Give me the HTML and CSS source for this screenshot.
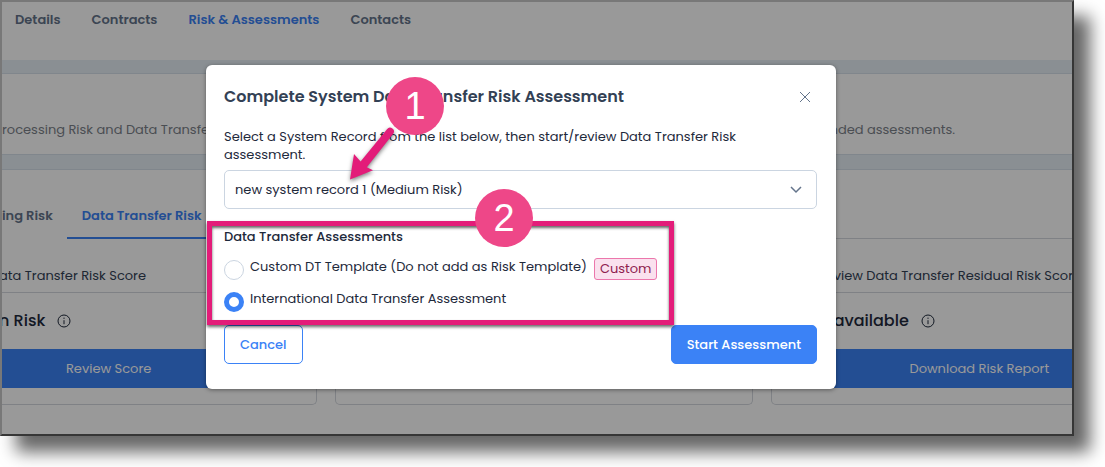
FILE: index.html
```
<!DOCTYPE html>
<html lang="en">
<head>
<meta charset="UTF-8" />
<meta name="viewport" content="width=device-width, initial-scale=1" />
<title>Risk &amp; Assessments</title>
<link rel="stylesheet" href="styles.css">
</head>
<body>

<div class="window">
  <div class="page">
    <nav class="main-nav">
      <a href="#">Details</a>
      <a href="#">Contracts</a>
      <a href="#" class="active">Risk &amp; Assessments</a>
      <a href="#">Contacts</a>
    </nav>

    <div class="intro">
      <span>rocessing Risk and Data Transfer</span>
      <span>nded assessments.</span>
    </div>

    <div class="panel">
      <nav class="tabs">
        <a href="#">ing Risk</a>
        <a href="#" class="active">Data Transfer Risk</a>
        <span class="tabs-line"></span>
      </nav>

      <div class="cards">
        <div class="card card-left">
          <p class="card-title">ata Transfer Risk Score</p>
          <div class="card-value">n Risk
            <svg class="info" viewBox="0 0 14 14"><circle cx="7" cy="7" r="6"/><path d="M7 6.2v4M7 3.6v1.3"/></svg>
          </div>
          <button class="card-btn">Review Score</button>
        </div>
        <div class="card"></div>
        <div class="card card-right">
          <p class="card-title">view Data Transfer Residual Risk Score</p>
          <div class="card-value">available
            <svg class="info" viewBox="0 0 14 14"><circle cx="7" cy="7" r="6"/><path d="M7 6.2v4M7 3.6v1.3"/></svg>
          </div>
          <button class="card-btn">Download Risk Report</button>
        </div>
      </div>
    </div>
  </div>

  <!-- Modal popup -->
  <div class="overlay">
    <div class="modal" role="dialog" aria-labelledby="modalTitle">
      <div class="modal-header">
        <h2 id="modalTitle">Complete System Data Transfer Risk Assessment</h2>
        <button class="close" aria-label="Close">
          <svg viewBox="0 0 12 12"><path d="M1 1l10 10M11 1L1 11"/></svg>
        </button>
      </div>

      <label class="help" for="record">Select a System Record from the list below, then start/review Data Transfer Risk assessment.</label>
      <div class="select-box">
        <select id="record">
          <option>new system record 1 (Medium Risk)</option>
        </select>
        <svg class="chevron" viewBox="0 0 12 8"><path d="M1 1l5 5 5-5"/></svg>
      </div>

      <fieldset class="options">
        <legend>Data Transfer Assessments</legend>
        <div class="option">
          <input type="radio" name="assessment" id="custom">
          <label for="custom">Custom DT Template (Do not add as Risk Template)</label>
          <span class="badge">Custom</span>
        </div>
        <div class="option">
          <input type="radio" name="assessment" id="international" checked>
          <label for="international">International Data Transfer Assessment</label>
        </div>
      </fieldset>

      <div class="modal-buttons">
        <button class="cancel">Cancel</button>
        <button class="start">Start Assessment</button>
      </div>

      <!-- Step markers -->
      <div class="highlight"></div>
      <span class="step step-one">1</span>
      <span class="step step-two">2</span>
      <svg class="arrow" viewBox="0 0 50 60"><path d="M41 5.2a3.7 3.7 0 0 1 6 4.8L20.8 43.2 27 46.2 4 55.5 8 30l6.6 7.4z"/></svg>
    </div>
  </div>
</div>

</body>
</html>
```
FILE: styles.css
```
* {
  box-sizing: border-box;
}
body {
  margin: 0;
  background: white;
  color: #1e293b;
  font-family: Poppins, Inter, sans-serif;
  font-size: 13px;
  line-height: 20px;
}
button, select {
  font: inherit;
}
a {
  color: inherit;
  text-decoration: none;
}
svg {
  fill: none;
  stroke: currentColor;
}
.window {
  position: relative;
  margin: 0 31px 31px 0;
  border: 2px solid;
  border-color: #787878 #363636 #363636 #787878;
  box-shadow: 16px 16px 16px rgba(0, 0, 0, 0.6);
}
.page {
  overflow: hidden;
  background: #e6eef6;
}

/* background page */
.main-nav {
  display: flex;
  gap: 31px;
  height: 58px;
  padding: 8px 13px;
  background: white;
  color: #64748b;
  font-weight: 600;
}
.main-nav .active,
.tabs .active {
  color: #3b82f6;
}
.intro {
  display: flex;
  justify-content: space-between;
  margin-top: 13px;
  padding: 46px 117px 14px 0;
  border: solid #d5dfea;
  border-width: 1px 0;
  background: white;
  color: #7c828a;
  white-space: nowrap;
}
.panel {
  margin-top: 14px;
  padding-bottom: 29px;
  border-top: 1px solid #d5dfea;
  background: white;
}
.tabs {
  display: flex;
  padding-top: 36px;
  color: #64748b;
  font-weight: 600;
}
.tabs a {
  padding: 0 14px 11px 0;
  border-bottom: 2px solid transparent;
}
.tabs .active {
  padding-left: 15px;
  border-color: #3b82f6;
}
.tabs-line {
  flex: 1;
  border-bottom: 1px solid #d4d8de;
}
.cards {
  display: grid;
  grid-template-columns: repeat(3, 1fr);
  gap: 18px;
  margin: 0 -116px 0 -102px;
}
.card {
  padding-bottom: 16px;
  border: 1px solid #d4d8de;
  border-top: none;
  border-radius: 5px;
}
.card-title {
  margin: 0;
  padding: 27px 0 6px;
  border-bottom: 1px solid #d4d8de;
  color: #334155;
  white-space: nowrap;
}
.card-value {
  display: flex;
  align-items: center;
  gap: 12px;
  height: 56px;
  font-size: 16px;
  font-weight: 500;
}
.card-left .card-title,
.card-left .card-value {
  padding-left: 98px;
}
.card-right .card-title,
.card-right .card-value {
  padding-left: 62px;
}
.info {
  width: 14px;
  height: 14px;
}
.card-btn {
  display: block;
  width: 100%;
  height: 39px;
  border: none;
  background: #3b82f6;
  color: white;
}

/* modal */
.overlay {
  position: absolute;
  inset: 0;
  display: flex;
  justify-content: center;
  align-items: flex-start;
  padding: 63px 32px 0 0;
  background: rgba(0, 0, 0, 0.4);
}
.modal {
  position: relative;
  width: 630px;
  max-width: 100%;
  padding: 20px 19px 25px 18px;
  border-radius: 6px;
  background: white;
  box-shadow: 0 1px 4px rgba(0, 0, 0, 0.4);
}
.modal-header {
  display: flex;
  justify-content: space-between;
  align-items: center;
  margin-bottom: 19px;
}
.modal-header h2 {
  margin: 0;
  color: #334155;
  font-size: 16px;
  font-weight: 600;
  line-height: 24px;
}
.close {
  display: flex;
  padding: 6px;
  border: none;
  background: none;
  color: #64748b;
}
.close svg {
  width: 12px;
  height: 12px;
}
.help {
  display: block;
  padding-right: 32px;
  line-height: 18px;
}
.select-box {
  position: relative;
  margin: 6px 0 18px;
}
.select-box select {
  display: block;
  width: 100%;
  height: 39px;
  padding: 0 10px;
  border: 1px solid #cbd5e1;
  border-radius: 5px;
  appearance: none;
  background: white;
  color: inherit;
}
.chevron {
  position: absolute;
  top: 16px;
  right: 15px;
  width: 12px;
  height: 8px;
  color: #64748b;
  stroke-width: 1.5;
}
.options {
  display: flex;
  flex-direction: column;
  gap: 8px;
  margin: 0;
  padding: 10px 0 0;
  border: none;
}
.options legend {
  padding: 0;
  font-weight: 500;
}
.option {
  display: flex;
  align-items: flex-start;
  height: 24px;
}
.option input {
  width: 20px;
  height: 20px;
  margin: 3px 6px 0 0;
  border: 1px solid #cbd5e1;
  border-radius: 50%;
  appearance: none;
  background: white;
}
.option input:checked {
  border: 5px solid #3b82f6;
}
.badge {
  margin: 1px 0 0 7px;
  padding: 0 5px;
  border: 1px solid #ec77ac;
  border-radius: 3px;
  background: #fae1ee;
  color: #8f1d50;
}
.modal-buttons {
  display: flex;
  justify-content: space-between;
  margin-top: 12px;
}
.modal-buttons button {
  height: 39px;
  padding: 0 15px;
  border: 1px solid #3b82f6;
  border-radius: 5px;
  font-weight: 500;
}
.modal-buttons .cancel {
  background: white;
  color: #3b82f6;
}
.modal-buttons .start {
  background: #3b82f6;
  color: white;
}

/* step markers */
.highlight {
  position: absolute;
  top: 156px;
  left: 1px;
  width: 467px;
  height: 104px;
  border: 5px solid #e31c79;
  box-shadow: 0 2px 3px rgba(0, 0, 0, 0.6), inset 0 2px 3px rgba(0, 0, 0, 0.6);
  pointer-events: none;
}
.step {
  position: absolute;
  width: 58px;
  height: 58px;
  border-radius: 50%;
  background: #ee4788;
  color: white;
  font-family: "Liberation Sans", Arial, sans-serif;
  font-size: 38px;
  line-height: 58px;
  text-align: center;
}
.step-one {
  top: 12px;
  left: 180px;
}
.step-two {
  top: 124px;
  left: 269px;
}
.arrow {
  position: absolute;
  top: 59px;
  left: 140px;
  width: 50px;
  height: 60px;
  fill: #e31c79;
  stroke: none;
  filter: drop-shadow(0 2px 2px rgba(0, 0, 0, 0.5));
}
```
